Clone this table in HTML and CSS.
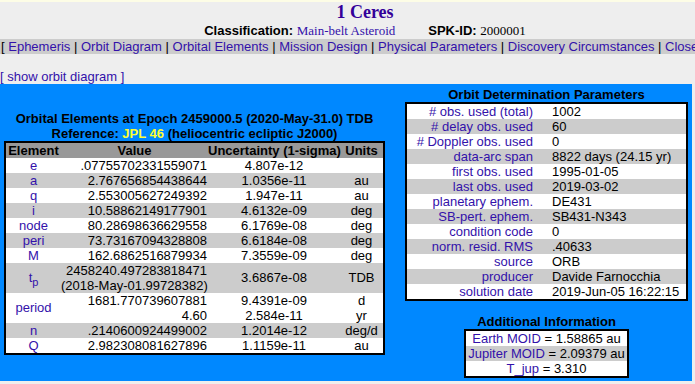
FILE: index.html
```html
<!DOCTYPE html>
<html>
<head>
<meta charset="utf-8">
<title>1 Ceres</title>
<link rel="stylesheet" href="styles.css">
</head>
<body>
<div class="page">
  <div class="strip"></div>
  <div class="head">
    <h1 class="title">1 Ceres</h1>
    <div class="classline"><b>Classification:</b> <a class="serif link">Main-belt Asteroid</a><span class="spk"><b>SPK-ID:</b> <span class="serif">2000001</span></span></div>
  </div>
  <div class="nav">[ <a class="link">Ephemeris</a> | <a class="link">Orbit Diagram</a> | <a class="link">Orbital Elements</a> | <a class="link">Mission Design</a> | <a class="link">Physical Parameters</a> | <a class="link">Discovery Circumstances</a> | <a class="link">Close Approaches</a> | <a class="link">Fireballs</a> ]</div>
  <div class="showorbit"><a class="link">[ show orbit diagram ]</a></div>
  <div class="blue">
    <div class="leftcol">
      <div class="caption">Orbital Elements at Epoch 2459000.5 (2020-May-31.0) TDB<br>Reference: <span class="yel">JPL 46</span> (heliocentric ecliptic J2000)</div>
      <table class="elements">
        <colgroup><col class="c1"><col class="c2"><col class="c3"><col class="c4"></colgroup>
        <tr class="hd"><th>Element</th><th>Value</th><th>Uncertainty (1-sigma)</th><th>Units</th></tr>
        <tr><td class="el">e</td><td class="val">.07755702331559071</td><td class="unc">4.807e-12</td><td class="un"></td></tr>
        <tr class="g"><td class="el">a</td><td class="val">2.767656854438644</td><td class="unc">1.0356e-11</td><td class="un">au</td></tr>
        <tr><td class="el">q</td><td class="val">2.553005627249392</td><td class="unc">1.947e-11</td><td class="un">au</td></tr>
        <tr class="g"><td class="el">i</td><td class="val">10.58862149177901</td><td class="unc">4.6132e-09</td><td class="un">deg</td></tr>
        <tr><td class="el">node</td><td class="val">80.28698636629558</td><td class="unc">6.1769e-08</td><td class="un">deg</td></tr>
        <tr class="g"><td class="el">peri</td><td class="val">73.73167094328808</td><td class="unc">6.6184e-08</td><td class="un">deg</td></tr>
        <tr><td class="el">M</td><td class="val">162.6862516879934</td><td class="unc">7.3559e-09</td><td class="un">deg</td></tr>
        <tr class="g"><td class="el">t<sub>p</sub></td><td class="val">2458240.497283818471<br>(2018-May-01.99728382)</td><td class="unc">3.6867e-08</td><td class="un">TDB</td></tr>
        <tr><td class="el" rowspan="2">period</td><td class="val">1681.770739607881</td><td class="unc">9.4391e-09</td><td class="un">d</td></tr>
        <tr><td class="val">4.60</td><td class="unc">2.584e-11</td><td class="un">yr</td></tr>
        <tr class="g"><td class="el">n</td><td class="val">.2140600924499002</td><td class="unc">1.2014e-12</td><td class="un">deg/d</td></tr>
        <tr><td class="el">Q</td><td class="val">2.982308081627896</td><td class="unc">1.1159e-11</td><td class="un">au</td></tr>
      </table>
    </div>
    <div class="rightcol">
      <div class="caption">Orbit Determination Parameters</div>
      <table class="od">
        <colgroup><col class="o1"><col class="o2"></colgroup>
        <tr><td class="lab"># obs. used (total)</td><td class="v">1002</td></tr>
        <tr class="g"><td class="lab"># delay obs. used</td><td class="v">60</td></tr>
        <tr><td class="lab"># Doppler obs. used</td><td class="v">0</td></tr>
        <tr class="g"><td class="lab">data-arc span</td><td class="v">8822 days (24.15 yr)</td></tr>
        <tr><td class="lab">first obs. used</td><td class="v">1995-01-05</td></tr>
        <tr class="g"><td class="lab">last obs. used</td><td class="v">2019-03-02</td></tr>
        <tr><td class="lab">planetary ephem.</td><td class="v">DE431</td></tr>
        <tr class="g"><td class="lab">SB-pert. ephem.</td><td class="v">SB431-N343</td></tr>
        <tr><td class="lab">condition code</td><td class="v">0</td></tr>
        <tr class="g"><td class="lab">norm. resid. RMS</td><td class="v">.40633</td></tr>
        <tr><td class="lab">source</td><td class="v">ORB</td></tr>
        <tr class="g"><td class="lab">producer</td><td class="v">Davide Farnocchia</td></tr>
        <tr><td class="lab">solution date</td><td class="v">2019-Jun-05 16:22:15</td></tr>
      </table>
      <div class="caption addtitle">Additional Information</div>
      <table class="ai">
        <tr><td><span class="link">Earth MOID</span> = 1.58865 au</td></tr>
        <tr class="g"><td><span class="link">Jupiter MOID</span> = 2.09379 au</td></tr>
        <tr><td><span class="link">T_jup</span> = 3.310</td></tr>
      </table>
    </div>
  </div>
</div>
</body>
</html>
```

FILE: styles.css
```css
html, body {
  margin: 0;
  padding: 0;
}
body {
  background: #eeeeee;
  font-family: "Liberation Sans", Arial, sans-serif;
  font-size: 13px;
  color: #000;
}
.page {
  width: 695px;
  height: 384px;
  overflow: hidden;
}
.strip {
  height: 2px;
  background: #fdfde6;
}
.head {
  width: 730px;
  text-align: center;
}
.title {
  margin: 0;
  font: bold 18px/21px "Liberation Serif", serif;
  color: #330099;
}
.classline {
  line-height: 16px;
  white-space: nowrap;
}
.serif {
  font-family: "Liberation Serif", serif;
}
.link {
  color: #3311aa;
}
.spk {
  margin-left: 33px;
}
.nav {
  background: #cccccc;
  line-height: 15px;
  white-space: nowrap;
  overflow: hidden;
  padding-left: 1px;
}
.showorbit {
  margin-top: 15px;
  line-height: 15px;
}
.blue {
  background: #0088ff;
  width: 692px;
  height: 297px;
  box-sizing: border-box;
  padding: 0 4px;
  display: flex;
  align-items: center;
  gap: 20px;
}
.leftcol {
  width: 381px;
  text-align: center;
}
.rightcol {
  width: 283px;
  text-align: center;
}
.caption {
  font-weight: bold;
  line-height: 15px;
  white-space: nowrap;
}
.yel {
  color: #ffff33;
}
table {
  border-collapse: separate;
  border-spacing: 0;
  border: 2px solid #000;
  background: #fff;
  table-layout: fixed;
  font-size: 13px;
}
td, th {
  padding: 0;
  line-height: 15px;
  white-space: nowrap;
}
.g {
  background: #cccccc;
}
.elements {
  width: 381px;
}
.c1 { width: 55px; }
.c2 { width: 147px; }
.c3 { width: 132px; }
.c4 { width: 43px; }
.hd {
  background: #999999;
}
.hd th {
  text-align: center;
  font-weight: bold;
}
.el {
  text-align: center;
  color: #3311aa;
}
.el sub {
  font-size: 11px;
  line-height: 0;
  vertical-align: -4px;
}
.val {
  text-align: right;
  padding-right: 1px;
}
.unc, .un {
  text-align: center;
}
.od {
  width: 283px;
}
.o1 { width: 136px; }
.o2 { width: 143px; }
.lab {
  text-align: right;
  padding-right: 10px;
  color: #3311aa;
}
.v {
  text-align: left;
  padding-left: 9px;
}
.addtitle {
  margin-top: 13px;
}
.ai {
  width: 165px;
  margin: 0 auto;
}
.ai td {
  text-align: center;
}
```
